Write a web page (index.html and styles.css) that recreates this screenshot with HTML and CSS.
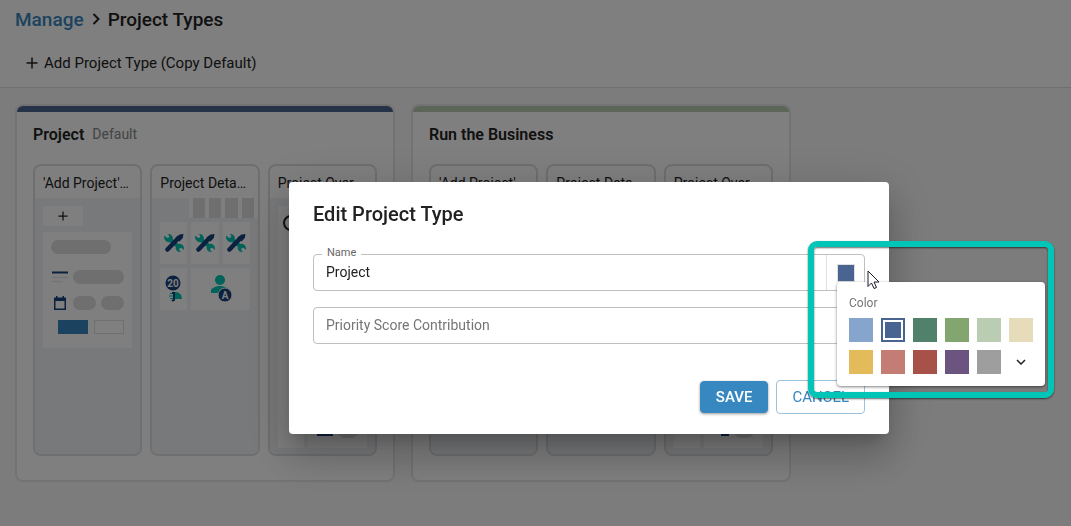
FILE: index.html
```
<!DOCTYPE html>
<html lang="en">
<head>
    <meta charset="UTF-8">
    <meta name="viewport" content="width=device-width, initial-scale=1.0">
    <title>Project Types</title>
    <link rel="stylesheet" href="styles.css">
</head>
<body>
    <svg class="sprite" aria-hidden="true">
        <symbol id="plus" viewBox="0 0 12 12"><path d="M6 0.500v11M0.500 6h11" fill="none" stroke="#222" stroke-width="1.5"/></symbol>
        <symbol id="tools" viewBox="0 0 20 18">
            <path d="M5 4.500L15.500 13.500" stroke="#00c5b3" stroke-width="4" fill="none"/>
            <path d="M0.500 1.500L3 4L5 3.500L5.200 1.500L3.500 0Q8 -0.500 9 4L7 8Q3 9 1 6Q-0.500 4 0.500 1.500ZM19.700 16L17.500 13.800L15.500 14.300L15.200 16.200L17 18Q12.500 18.500 11.500 14L13.500 10.200Q17 9 19 11.500Q20.500 13.500 19.700 16Z" fill="#00c5b3"/>
            <path d="M3.500 15.500L14 4.500" stroke="#17427f" stroke-width="4.500" stroke-linecap="round"/>
            <path d="M11.500 3.500L15.500 0.500L19.500 0L18.800 4L15.500 7.500Z" fill="#17427f"/>
        </symbol>
        <symbol id="lines" viewBox="0 0 16 12">
            <path d="M0 1.500h16" stroke="#17427f" stroke-width="2"/>
            <path d="M0 6.500h16M0 10.500h11" stroke="#e4e9ee" stroke-width="1.500"/>
        </symbol>
        <symbol id="calendar" viewBox="0 0 12 14">
            <path d="M2 0h1.500v1.500h5V0H10v1.500h2V14H0V1.500h2zM1.500 5v7.500h9V5z" fill="#17427f" fill-rule="evenodd"/>
        </symbol>
    </svg>

    <header class="header">
        <nav class="breadcrumb">
            <a href="#">Manage</a>
            <svg width="8" height="12" viewBox="0 0 8 12"><path d="M1.500 1l5 5-5 5" fill="none" stroke="#222" stroke-width="2"/></svg>
            <h1>Project Types</h1>
        </nav>
        <button class="add-button" type="button">
            <svg width="12" height="12"><use href="#plus"/></svg>
            Add Project Type (Copy Default)
        </button>
    </header>

    <main class="types">
        <section class="type-card type-project">
            <div class="type-title"><h2>Project</h2><span>Default</span></div>
            <div class="panels">
                <div class="panel">
                    <h3>'Add Project'…</h3>
                    <div class="panel-body">
                        <div class="mini-add"><svg width="10" height="10"><use href="#plus"/></svg></div>
                        <div class="mini-form">
                            <div class="pill pill-title"></div>
                            <div class="mini-row"><svg width="16" height="12"><use href="#lines"/></svg><div class="pill"></div></div>
                            <div class="mini-row"><svg width="16" height="14"><use href="#calendar"/></svg><div class="pill"></div><div class="pill"></div></div>
                            <div class="mini-actions"><div class="mini-save"></div><div class="mini-cancel"></div></div>
                        </div>
                    </div>
                </div>
                <div class="panel">
                    <h3>Project Deta…</h3>
                    <div class="panel-body">
                        <div class="mini-tabs"><i></i><i></i><i></i><i></i></div>
                        <div class="tiles">
                            <div class="tile"><svg width="20" height="18"><use href="#tools"/></svg></div>
                            <div class="tile"><svg width="20" height="18"><use href="#tools"/></svg></div>
                            <div class="tile"><svg width="20" height="18"><use href="#tools"/></svg></div>
                            <div class="tile">
                                <svg width="18" height="28" viewBox="0 0 18 28">
                                    <path d="M10 17h1q6 1 6 7h-7zM5 18h3v1H5zM4 20.500h4v1H4zM5 23h3v1H5z" fill="#00c5b3"/>
                                    <path d="M7 18h3M9 18v7q-1 1-2 0" fill="none" stroke="#17427f" stroke-width="2"/>
                                    <circle cx="8" cy="8" r="7.500" fill="#17427f"/>
                                    <text x="8" y="12" text-anchor="middle" class="badge-text">20</text>
                                </svg>
                            </div>
                            <div class="tile tile-wide">
                                <svg width="22" height="28" viewBox="0 0 22 28">
                                    <circle cx="10" cy="5" r="5" fill="#00c5b3"/>
                                    <path d="M1 18v-3q3-4 9-4t9 4v3z" fill="#00c5b3"/>
                                    <circle cx="15" cy="20" r="7" fill="#17427f" stroke="#fff"/>
                                    <text x="15" y="24" text-anchor="middle" class="badge-text">A</text>
                                </svg>
                            </div>
                        </div>
                    </div>
                </div>
                <div class="panel">
                    <h3>Project Over…</h3>
                    <div class="panel-body overview">
                        <div class="overview-side"><svg width="16" height="16"><circle cx="8" cy="8" r="7" fill="none" stroke="#222" stroke-width="2"/></svg></div>
                        <div class="overview-main"><div class="mini-bar"></div><div class="pill"></div></div>
                    </div>
                </div>
            </div>
        </section>

        <section class="type-card type-business">
            <div class="type-title"><h2>Run the Business</h2></div>
            <div class="panels">
                <div class="panel">
                    <h3>'Add Project'…</h3>
                    <div class="panel-body"></div>
                </div>
                <div class="panel">
                    <h3>Project Deta…</h3>
                    <div class="panel-body"></div>
                </div>
                <div class="panel">
                    <h3>Project Over…</h3>
                    <div class="panel-body overview">
                        <div class="overview-side"></div>
                        <div class="overview-main"><div class="mini-bar mini-bar-short"></div><div class="pill"></div></div>
                    </div>
                </div>
            </div>
        </section>
    </main>

    <div class="backdrop">
        <form class="dialog" role="dialog" aria-labelledby="dialogTitle">
            <h2 id="dialogTitle">Edit Project Type</h2>
            <div class="field">
                <label for="name">Name</label>
                <input type="text" id="name" value="Project">
                <div class="color-picker">
                    <button class="color-button" type="button" aria-label="Color"></button>
                    <div class="color-menu">
                        <span class="color-title">Color</span>
                        <div class="swatches">
                            <button type="button" class="swatch light-blue" aria-label="Light blue"></button>
                            <button type="button" class="swatch blue selected" aria-label="Blue"></button>
                            <button type="button" class="swatch teal" aria-label="Teal"></button>
                            <button type="button" class="swatch green" aria-label="Green"></button>
                            <button type="button" class="swatch light-green" aria-label="Light green"></button>
                            <button type="button" class="swatch sand" aria-label="Sand"></button>
                            <button type="button" class="swatch yellow" aria-label="Yellow"></button>
                            <button type="button" class="swatch rose" aria-label="Rose"></button>
                            <button type="button" class="swatch red" aria-label="Red"></button>
                            <button type="button" class="swatch purple" aria-label="Purple"></button>
                            <button type="button" class="swatch gray" aria-label="Gray"></button>
                            <button type="button" class="swatch more" aria-label="More colors"><svg width="10" height="6" viewBox="0 0 10 6"><path d="M1 1l4 4 4-4" fill="none" stroke="#222" stroke-width="1.500"/></svg></button>
                        </div>
                    </div>
                    <div class="highlight"></div>
                    <svg class="cursor" width="13" height="20" viewBox="0 0 13 20"><path d="M1 1v15.500l3.500-3.500 2.500 5.500 2.500-1-2.500-5.500h5z" fill="#fff" stroke="#1a1a2a"/></svg>
                </div>
            </div>
            <div class="field">
                <input type="text" placeholder="Priority Score Contribution" aria-label="Priority Score Contribution">
            </div>
            <div class="actions">
                <button class="save" type="submit">SAVE</button>
                <button class="cancel" type="button">CANCEL</button>
            </div>
        </form>
    </div>
</body>
</html>
```

FILE: styles.css
```
* {
    box-sizing: border-box;
}
body {
    font-family: Roboto, "Liberation Sans", sans-serif;
    font-size: 14px;
    color: #222;
    background-color: #f8f8f8;
    margin: 0;
    min-height: 100vh;
    overflow: hidden;
}
h1, h2, h3 {
    margin: 0;
}
button {
    font-family: inherit;
    padding: 0;
    border: none;
    cursor: pointer;
}
.sprite {
    display: none;
}

/* Header */
.header {
    background-color: #fff;
    border-bottom: 1px solid #e0e0e0;
    padding: 6px 15px 9px;
}
.breadcrumb {
    display: flex;
    align-items: center;
    gap: 8px;
    height: 26px;
}
.breadcrumb a {
    color: #3787c0;
    text-decoration: none;
}
.breadcrumb a, .breadcrumb h1 {
    font-size: 19px;
    font-weight: 500;
}
.add-button {
    display: flex;
    align-items: center;
    gap: 6px;
    height: 30px;
    margin-top: 16px;
    padding: 0 11px;
    background: none;
    color: #222;
    font-size: 15px;
}

/* Project type cards */
.types {
    display: flex;
    flex-wrap: wrap;
    gap: 16px;
    padding: 16px 15px;
}
.type-card {
    width: 380px;
    padding: 0 16px 24px;
    background-color: #fff;
    border: 2px solid #e6e6e6;
    border-radius: 8px;
    overflow: hidden;
}
.type-card::before {
    content: "";
    display: block;
    height: 6px;
    margin: 0 -16px;
    background-color: #4a6491;
}
.type-business::before {
    background-color: #b9cdb0;
}
.type-title {
    display: flex;
    align-items: center;
    gap: 8px;
    height: 44px;
}
.type-title h2 {
    font-size: 16px;
    font-weight: 600;
}
.type-title span {
    color: #888;
}
.panels {
    display: grid;
    grid-template-columns: repeat(3, 1fr);
    gap: 8px;
    margin-top: 8px;
}
.panel {
    min-width: 0;
    border: 2px solid #dedede;
    border-radius: 8px;
    overflow: hidden;
}
.panel h3 {
    height: 32px;
    padding: 0 8px;
    font-size: 14px;
    font-weight: 400;
    line-height: 34px;
    white-space: nowrap;
}
.panel-body {
    height: 256px;
    padding: 8px;
    background-color: #f0f3f7;
}

/* Page previews */
.mini-add {
    display: flex;
    align-items: center;
    justify-content: center;
    width: 40px;
    height: 20px;
    margin-bottom: 6px;
    background-color: #fff;
}
.mini-form {
    height: 116px;
    padding: 8px;
    background-color: #fff;
}
.pill {
    flex: 1;
    height: 14px;
    border-radius: 7px;
    background-color: #dedede;
}
.pill-title {
    width: 60px;
    margin-bottom: 16px;
}
.mini-row {
    display: flex;
    align-items: center;
    gap: 5px;
    margin-bottom: 12px;
    padding-left: 1px;
}
.mini-actions {
    display: flex;
    justify-content: flex-end;
    gap: 6px;
    margin-top: -2px;
}
.mini-save, .mini-cancel {
    width: 30px;
    height: 14px;
    background-color: #3787c0;
}
.mini-cancel {
    background-color: #fff;
    border: 1px solid #dedede;
}
.mini-tabs {
    display: flex;
    gap: 4px;
    height: 20px;
    margin: -8px -8px 4px 29px;
    padding: 0 4px;
    background-color: #fff;
}
.mini-tabs i {
    flex: 1;
    background-color: #dedede;
}
.tiles {
    display: grid;
    grid-template-columns: repeat(3, 1fr);
    gap: 4px;
}
.tile {
    display: flex;
    align-items: center;
    justify-content: center;
    height: 42px;
    background-color: #fff;
}
.tile-wide {
    grid-column: span 2;
}
.badge-text {
    font-size: 10px;
    font-weight: 700;
    fill: #fff;
}
.overview {
    display: grid;
    grid-template-columns: 26px 1fr;
    gap: 4px;
    padding-bottom: 6px;
}
.overview-side, .overview-main {
    display: flex;
    background-color: #fff;
}
.overview-side {
    padding: 9px 5px;
}
.overview-main {
    align-items: flex-end;
    justify-content: flex-end;
    gap: 5px;
    padding: 0 9px 10px;
}
.overview-main .pill {
    flex: none;
    width: 20px;
}
.mini-bar {
    width: 16px;
    height: 2px;
    margin-bottom: 2px;
    background-color: #17427f;
}
.mini-bar-short {
    width: 8px;
}

/* Edit dialog */
.backdrop {
    position: fixed;
    inset: 0;
    display: flex;
    align-items: center;
    justify-content: center;
    padding: 90px 0 0 107px;
    background-color: rgba(0, 0, 0, 0.5);
}
.dialog {
    width: 600px;
    padding: 20px 24px;
    background-color: #fff;
    border-radius: 4px;
    box-shadow: 0 11px 15px -7px rgba(0, 0, 0, 0.2), 0 24px 38px 3px rgba(0, 0, 0, 0.14), 0 9px 46px 8px rgba(0, 0, 0, 0.12);
}
.dialog h2 {
    margin-bottom: 28px;
    font-size: 20px;
    font-weight: 500;
    line-height: 24px;
}
.field {
    position: relative;
    display: flex;
    height: 37px;
    margin-bottom: 16px;
    border: 1px solid #c0c0c0;
    border-radius: 4px;
}
.field label {
    position: absolute;
    top: -9px;
    left: 8px;
    padding: 0 5px;
    background-color: #fff;
    color: #666;
    font-size: 11px;
    line-height: 14px;
}
.field input {
    flex: 1;
    min-width: 0;
    padding: 0 12px 2px;
    border: none;
    outline: none;
    background: none;
    color: #222;
    font-family: inherit;
    font-size: 14px;
}
.field input::placeholder {
    color: #757575;
    opacity: 1;
}
.color-picker {
    position: relative;
    display: flex;
    align-items: center;
    justify-content: center;
    width: 38px;
    border-left: 1px solid #e0e0e0;
}
.color-button {
    width: 18px;
    height: 18px;
    background-color: #4a6491;
    border: 1px solid #e0e0e0;
}
.color-menu {
    position: absolute;
    z-index: 2;
    top: 27px;
    left: 10px;
    width: 208px;
    padding: 12px;
    background-color: #fff;
    border-radius: 4px;
    box-shadow: 0 1px 3px rgba(0, 0, 0, 0.5);
}
.color-title {
    display: block;
    margin-bottom: 6px;
    color: #757575;
    font-size: 12px;
    line-height: 18px;
}
.swatches {
    display: grid;
    grid-template-columns: repeat(6, 24px);
    gap: 8px;
}
.swatch {
    height: 24px;
}
.light-blue { background-color: #86a5cd; }
.blue { background-color: #4a6491; }
.teal { background-color: #51806b; }
.green { background-color: #83a671; }
.light-green { background-color: #bacdb2; }
.sand { background-color: #e6dcb9; }
.yellow { background-color: #e3bb5b; }
.rose { background-color: #c37d74; }
.red { background-color: #a85148; }
.purple { background-color: #6b5480; }
.gray { background-color: #9e9e9e; }
.more {
    display: flex;
    align-items: center;
    justify-content: center;
    background-color: #fff;
}
.selected {
    border: 2px solid #4a6491;
    box-shadow: inset 0 0 0 2px #fff;
}
.highlight {
    position: absolute;
    z-index: 1;
    top: -14px;
    left: -19px;
    width: 246px;
    height: 157px;
    border: 6px solid #00c5b7;
    border-radius: 9px;
    box-shadow: 0 1px 2px rgba(0, 0, 0, 0.6), inset 0 1px 2px rgba(0, 0, 0, 0.6);
    pointer-events: none;
}
.cursor {
    position: absolute;
    z-index: 3;
    top: 15px;
    left: 40px;
}
.actions {
    display: flex;
    align-items: center;
    justify-content: flex-end;
    gap: 8px;
    margin-top: 36px;
}
.actions button {
    height: 34px;
    padding: 0 15px;
    border: 1px solid #9bc3df;
    border-radius: 4px;
    background-color: #fff;
    color: #3787c0;
    font-size: 15px;
    line-height: 30px;
}
.actions .save {
    height: 32px;
    border-color: #3787c0;
    background-color: #3787c0;
    color: #fff;
    font-weight: 500;
    line-height: 28px;
    box-shadow: 0 1px 3px rgba(0, 0, 0, 0.4);
}
```
